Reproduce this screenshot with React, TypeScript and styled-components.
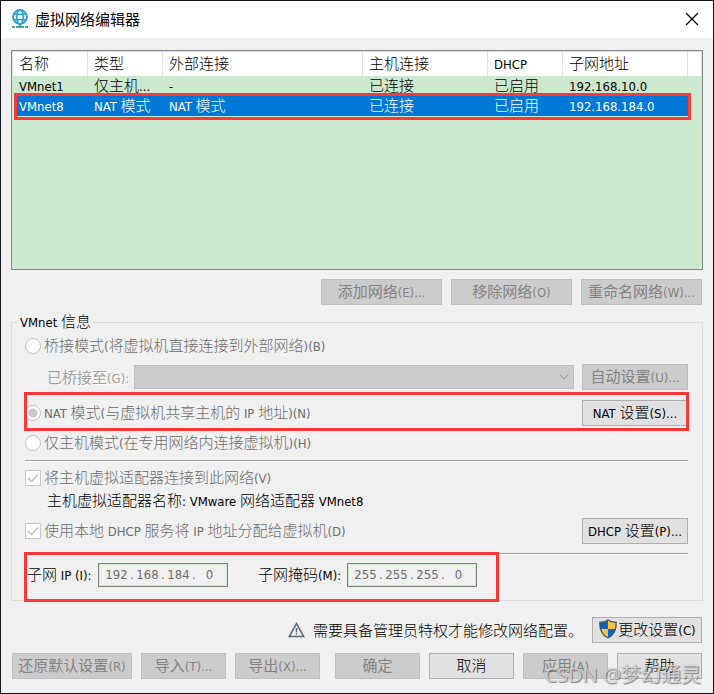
import React from "react";
import styled, { createGlobalStyle, css } from "styled-components";

const latinFont = `"DejaVu Sans Condensed", "Noto Sans", sans-serif`;
const cjkFont = `"Noto Sans CJK SC", sans-serif`;

const GlobalStyle = createGlobalStyle`
  * { box-sizing: border-box; }
  body { margin: 0; background: #f0f0f0; }
  body, button, input, select {
    font-family: ${cjkFont};
    font-size: 15px;
    line-height: 20px;
    font-weight: 300;
    color: #000;
  }
`;

const Latin = styled.span`
  font-family: ${latinFont};
  font-size: 13px;
  font-weight: 400;
  line-height: 0;
  white-space: pre;
`;

/* Latin runs are set smaller than the Chinese characters around them. */
const Mixed = ({ text }: { text: string }) => (
  <>
    {text
      .split(/([\x20-\x7e]+)/)
      .filter(Boolean)
      .map((run, i) =>
        /^[\x20-\x7e]/.test(run) ? <Latin key={i}>{run}</Latin> : <React.Fragment key={i}>{run}</React.Fragment>
      )}
  </>
);

const Dialog = styled.main`
  position: relative;
  min-height: 100vh;
  border: 1px solid #15131a;
  background: #f0f0f0;
  white-space: nowrap;
`;

const TitleBar = styled.header`
  display: flex;
  align-items: center;
  height: 37px;
  padding: 0 14px 2px 10px;
  background: #fff;
`;

const Title = styled.h1`
  flex: 1;
  margin: 0 0 0 6px;
  font-size: 15px;
  font-weight: 400;
`;

const CloseButton = styled.button`
  display: flex;
  padding: 0;
  border: 0;
  background: none;
`;

const Body = styled.div`
  padding: 12px 10px 11px;
`;

const ListBox = styled.div`
  height: 220px;
  padding: 1px;
  border: 1px solid #828790;
  background: #cce8cf;
`;

const Table = styled.table`
  width: 100%;
  table-layout: fixed;
  border-collapse: separate;
  border-spacing: 0;
`;

const HeadCell = styled.th<{ $width?: number }>`
  width: ${(p) => (p.$width ? `${p.$width}px` : "auto")};
  height: 24px;
  padding: 0 0 2px 6px;
  border-right: 1px solid #e5e5e5;
  background: #fff;
  text-align: left;
  font-weight: 300;
  &:last-child { padding: 0; border-right: 0; }
`;

const Cell = styled.td`
  height: 20px;
  padding: 0 0 2px 6px;
  line-height: 18px;
  &:last-child { padding: 0; }
`;

const frame = css`
  content: "";
  position: absolute;
  border: 3px solid #fc3737;
  pointer-events: none;
`;

const Row = styled.tr<{ $selected?: boolean }>`
  ${(p) =>
    p.$selected &&
    css`
      position: relative;
      color: #fff;
      ${Cell}:not(:last-child) { background: #0078d7; }
      ${Cell}:first-child {
        padding-left: 3px;
        border-left: 3px solid transparent;
        background-clip: padding-box;
      }
      ${Cell}:last-child::after { ${frame} top: -3px; right: 10px; bottom: -4px; left: 1px; }
    `}
`;

const Button = styled.button<{ $width: number }>`
  display: flex;
  align-items: center;
  justify-content: center;
  flex: none;
  width: ${(p) => p.$width}px;
  height: 26px;
  padding: 0 0 2px;
  border: 1px solid #adadad;
  background: #e1e1e1;
  &:disabled {
    border-color: #bfbfbf;
    background: #ccc;
    color: #838383;
    font-weight: 400;
  }
`;

const ButtonRow = styled.div<{ $top: number; $spread?: boolean }>`
  display: flex;
  align-items: center;
  justify-content: ${(p) => (p.$spread ? "space-between" : "flex-end")};
  gap: 9px;
  margin-top: ${(p) => p.$top}px;
  padding: 0 1px;
`;

const ButtonGroup = styled.div`
  display: flex;
  gap: 9px;
`;

const Group = styled.fieldset`
  margin: 8px 0 0;
  min-width: 0;
  padding: 2px 14px 13px 13px;
  border: 1px solid #dcdcdc;
`;

const Legend = styled.legend`
  height: 18px;
  margin-left: -7px;
  padding: 0 2px;
  line-height: 16px;
`;

const Line = styled.div<{ $top?: number }>`
  display: flex;
  align-items: center;
  justify-content: space-between;
  height: 26px;
  margin-top: ${(p) => p.$top ?? 0}px;
`;

const NatLine = styled(Line)`
  position: relative;
  &::after { ${frame} top: -8px; right: -1px; bottom: -5px; left: -1px; }
`;

const Option = styled.label`
  display: flex;
  align-items: center;
  gap: 3px;
  color: #6d6d6d;
`;

const OptionText = styled.span`
  padding-bottom: 2px;
`;

const Radio = styled.input.attrs({ type: "radio", disabled: true })`
  appearance: none;
  width: 16px;
  height: 16px;
  margin: 0;
  border: 1px solid #c3c3c3;
  border-radius: 50%;
  background: #fff;
  &:checked { background: radial-gradient(circle, #c8c8c8 0 4px, #fff 5px); }
`;

const CheckWrap = styled.span`
  display: grid;
  > * { grid-area: 1 / 1; }
`;

const Check = styled.input.attrs({ type: "checkbox", disabled: true })`
  appearance: none;
  width: 16px;
  height: 16px;
  margin: 0;
  border: 1px solid #c8c8c8;
  background: #fff;
`;

const BridgeLabel = styled.label`
  width: 109px;
  padding-left: 22px;
  color: #a0a0a0;
  font-weight: 400;
  text-shadow: 1px 1px 0 #fff;
`;

const AdapterName = styled.p`
  margin: 0;
  padding: 0 0 2px 22px;
  line-height: 18px;
`;

const SelectWrap = styled.span`
  display: grid;
  flex: 1;
  align-items: center;
  margin-right: 8px;
  > * { grid-area: 1 / 1; }
  svg { justify-self: end; margin-right: 5px; }
`;

const Select = styled.select`
  appearance: none;
  width: 100%;
  height: 24px;
  border: 1px solid #bfbfbf;
  background: #ccc;
  &:disabled { opacity: 1; }
`;

const Divider = styled.hr<{ $top: number }>`
  height: 2px;
  margin: ${(p) => p.$top}px 0 0;
  border: 0;
  border-top: 1px solid #a0a0a0;
  border-bottom: 1px solid #fff;
`;

const AddressLine = styled.div`
  position: relative;
  display: flex;
  align-items: center;
  width: fit-content;
  margin-top: 8px;
  &::after { ${frame} top: -11px; right: -22px; bottom: -15px; left: -1px; }
`;

const AddressLabel = styled.label<{ $width: number; $left?: number }>`
  width: ${(p) => p.$width}px;
  margin-left: ${(p) => p.$left ?? 0}px;
  padding-bottom: 2px;
`;

const AddressBox = styled.div`
  display: flex;
  align-items: center;
  width: 130px;
  height: 24px;
  padding-left: 4px;
  border: 1px solid #7a8578;
  box-shadow: inset 0 0 0 1px #cce8cf;
  color: #6d6d6d;
`;

const Octet = styled.input`
  width: 27px;
  padding: 0;
  border: 0;
  background: none;
  color: #6d6d6d;
  font-family: ${latinFont};
  font-size: 13px;
  font-weight: 400;
  text-align: center;
`;

const Dot = styled.span`
  width: 4px;
  font-family: ${latinFont};
  font-size: 13px;
  font-weight: 400;
`;

const Notice = styled.p`
  display: flex;
  align-items: center;
  gap: 8px;
  margin: 0;
`;

const Watermark = styled.div`
  position: absolute;
  right: 12px;
  bottom: 3px;
  color: rgba(255, 255, 255, 0.6);
  font-family: "Noto Sans", ${cjkFont};
  font-size: 20px;
  font-weight: 400;
  line-height: 30px;
  text-shadow: 1px 1px 1px rgba(90, 90, 90, 0.7), 0 0 1px rgba(110, 110, 110, 0.6);
  pointer-events: none;
`;

const GlobeIcon = () => (
  <svg width="18" height="20" viewBox="0 0 18 20" fill="none" aria-hidden="true">
    <circle cx="9" cy="8" r="7" fill="#eaf8fd" stroke="#2b9fce" strokeWidth="1.8" />
    <ellipse cx="9" cy="8" rx="3.3" ry="7" stroke="#2b9fce" strokeWidth="1.5" />
    <path d="M2.5 5.3h13M2.5 10.7h13" stroke="#2b9fce" strokeWidth="1.6" />
    <path d="M9 15v3" stroke="#2b9fce" strokeWidth="2" />
    <path d="M1 18h3M5 18h8M14 18h3" stroke="#4b9f92" strokeWidth="2" />
  </svg>
);

const CloseIcon = () => (
  <svg width="14" height="14" viewBox="0 0 14 14" aria-hidden="true">
    <path d="M1 1l12 12M13 1L1 13" stroke="#000" strokeWidth="1.2" />
  </svg>
);

const TickIcon = () => (
  <svg width="16" height="16" viewBox="0 0 16 16" fill="none" aria-hidden="true">
    <path d="M3 8l3.5 3.5L13 4.5" stroke="#c4c4c4" strokeWidth="1.6" />
  </svg>
);

const ChevronIcon = () => (
  <svg width="10" height="6" viewBox="0 0 10 6" fill="none" aria-hidden="true">
    <path d="M0.7 0.7L5 5L9.3 0.7" stroke="#a0a0a0" strokeWidth="1.2" />
  </svg>
);

const WarningIcon = () => (
  <svg width="17" height="16" viewBox="0 0 17 16" fill="none" aria-hidden="true">
    <path d="M8.5 1.6L15.7 14.6H1.3z" stroke="#5c6b76" strokeWidth="1.5" />
    <path d="M8.5 6v4.5M8.5 11.5v1.5" stroke="#5c6b76" strokeWidth="1.5" />
  </svg>
);

const shieldPath = "M10 1C7.5 2.8 4.5 3.4 1.8 3.4 1.6 10 3 15.5 10 19c7-3.5 8.4-9 8.2-15.6C15.5 3.4 12.5 2.8 10 1z";

const ShieldIcon = () => (
  <svg width="20" height="20" viewBox="0 0 20 20" aria-hidden="true">
    <defs>
      <clipPath id="shield">
        <path d={shieldPath} />
      </clipPath>
    </defs>
    <g clipPath="url(#shield)">
      <path d="M0 0h10v10H0zM10 10h10v10H10z" fill="#0a66c6" />
      <path d="M10 0h10v10H10zM0 10h10v10H0z" fill="#fdc23c" />
    </g>
    <path d={shieldPath} fill="none" stroke="#4c5560" strokeWidth="1.3" />
  </svg>
);

const Address = ({ id, label, octets }: { id: string; label: string; octets: string[] }) => (
  <AddressBox role="group" aria-label={label}>
    {octets.map((octet, i) => (
      <React.Fragment key={i}>
        {i > 0 && <Dot>.</Dot>}
        <Octet
          id={i === 0 ? id : undefined}
          aria-label={i === 0 ? undefined : `${label} ${i + 1}`}
          defaultValue={octet}
          disabled
        />
      </React.Fragment>
    ))}
  </AddressBox>
);

const columns = [
  { name: "名称", width: 75 },
  { name: "类型", width: 75 },
  { name: "外部连接", width: 200 },
  { name: "主机连接", width: 125 },
  { name: "DHCP", width: 75 },
  { name: "子网地址", width: 125 },
  { name: "" },
];

const networks = [
  ["VMnet1", "仅主机...", "-", "已连接", "已启用", "192.168.10.0", ""],
  ["VMnet8", "NAT 模式", "NAT 模式", "已连接", "已启用", "192.168.184.0", ""],
];

export default function App() {
  return (
    <>
      <GlobalStyle />
      <Dialog>
        <TitleBar>
          <GlobeIcon />
          <Title>虚拟网络编辑器</Title>
          <CloseButton aria-label="关闭">
            <CloseIcon />
          </CloseButton>
        </TitleBar>
        <Body>
          <ListBox>
            <Table>
              <thead>
                <tr>
                  {columns.map((column, i) => (
                    <HeadCell key={i} $width={column.width}>
                      <Mixed text={column.name} />
                    </HeadCell>
                  ))}
                </tr>
              </thead>
              <tbody>
                {networks.map((cells, r) => (
                  <Row key={r} $selected={r === 1}>
                    {cells.map((text, i) => (
                      <Cell key={i}>
                        <Mixed text={text} />
                      </Cell>
                    ))}
                  </Row>
                ))}
              </tbody>
            </Table>
          </ListBox>

          <ButtonRow $top={9}>
            <Button $width={121} disabled><span><Mixed text="添加网络(E)..." /></span></Button>
            <Button $width={121} disabled><span><Mixed text="移除网络(O)" /></span></Button>
            <Button $width={121} disabled><span><Mixed text="重命名网络(W)..." /></span></Button>
          </ButtonRow>

          <Group>
            <Legend><Mixed text="VMnet 信息" /></Legend>
            <Line>
              <Option>
                <Radio name="mode" />
                <OptionText><Mixed text="桥接模式(将虚拟机直接连接到外部网络)(B)" /></OptionText>
              </Option>
            </Line>
            <Line $top={5}>
              <BridgeLabel htmlFor="bridge"><Mixed text="已桥接至(G):" /></BridgeLabel>
              <SelectWrap>
                <Select id="bridge" disabled />
                <ChevronIcon />
              </SelectWrap>
              <Button $width={106} disabled><span><Mixed text="自动设置(U)..." /></span></Button>
            </Line>
            <NatLine $top={10}>
              <Option>
                <Radio name="mode" defaultChecked />
                <OptionText><Mixed text="NAT 模式(与虚拟机共享主机的 IP 地址)(N)" /></OptionText>
              </Option>
              <Button $width={106}><span><Mixed text="NAT 设置(S)..." /></span></Button>
            </NatLine>
            <Line $top={4}>
              <Option>
                <Radio name="mode" />
                <OptionText><Mixed text="仅主机模式(在专用网络内连接虚拟机)(H)" /></OptionText>
              </Option>
            </Line>
            <Divider $top={4} />
            <Line $top={3}>
              <Option>
                <CheckWrap><Check defaultChecked /><TickIcon /></CheckWrap>
                <OptionText><Mixed text="将主机虚拟适配器连接到此网络(V)" /></OptionText>
              </Option>
            </Line>
            <AdapterName><Mixed text="主机虚拟适配器名称: VMware 网络适配器 VMnet8" /></AdapterName>
            <Line $top={7}>
              <Option>
                <CheckWrap><Check defaultChecked /><TickIcon /></CheckWrap>
                <OptionText><Mixed text="使用本地 DHCP 服务将 IP 地址分配给虚拟机(D)" /></OptionText>
              </Option>
              <Button $width={106}><span><Mixed text="DHCP 设置(P)..." /></span></Button>
            </Line>
            <Divider $top={9} />
            <AddressLine>
              <AddressLabel $width={71} $left={2} htmlFor="subnet"><Mixed text="子网 IP (I):" /></AddressLabel>
              <Address id="subnet" label="子网 IP" octets={["192", "168", "184", "0"]} />
              <AddressLabel $width={89} $left={30} htmlFor="mask"><Mixed text="子网掩码(M):" /></AddressLabel>
              <Address id="mask" label="子网掩码" octets={["255", "255", "255", "0"]} />
            </AddressLine>
          </Group>

          <ButtonRow $top={16}>
            <Notice>
              <WarningIcon />
              需要具备管理员特权才能修改网络配置。
            </Notice>
            <Button $width={110}><ShieldIcon /><span><Mixed text="更改设置(C)" /></span></Button>
          </ButtonRow>

          <ButtonRow $top={10} $spread>
            <ButtonGroup>
              <Button $width={120} disabled><span><Mixed text="还原默认设置(R)" /></span></Button>
              <Button $width={85} disabled><span><Mixed text="导入(T)..." /></span></Button>
              <Button $width={85} disabled><span><Mixed text="导出(X)..." /></span></Button>
            </ButtonGroup>
            <ButtonGroup>
              <Button $width={85} disabled>确定</Button>
              <Button $width={85}>取消</Button>
              <Button $width={85} disabled><span><Mixed text="应用(A)" /></span></Button>
              <Button $width={85}>帮助</Button>
            </ButtonGroup>
          </ButtonRow>
        </Body>
        <Watermark>CSDN @梦幻通灵</Watermark>
      </Dialog>
    </>
  );
}
